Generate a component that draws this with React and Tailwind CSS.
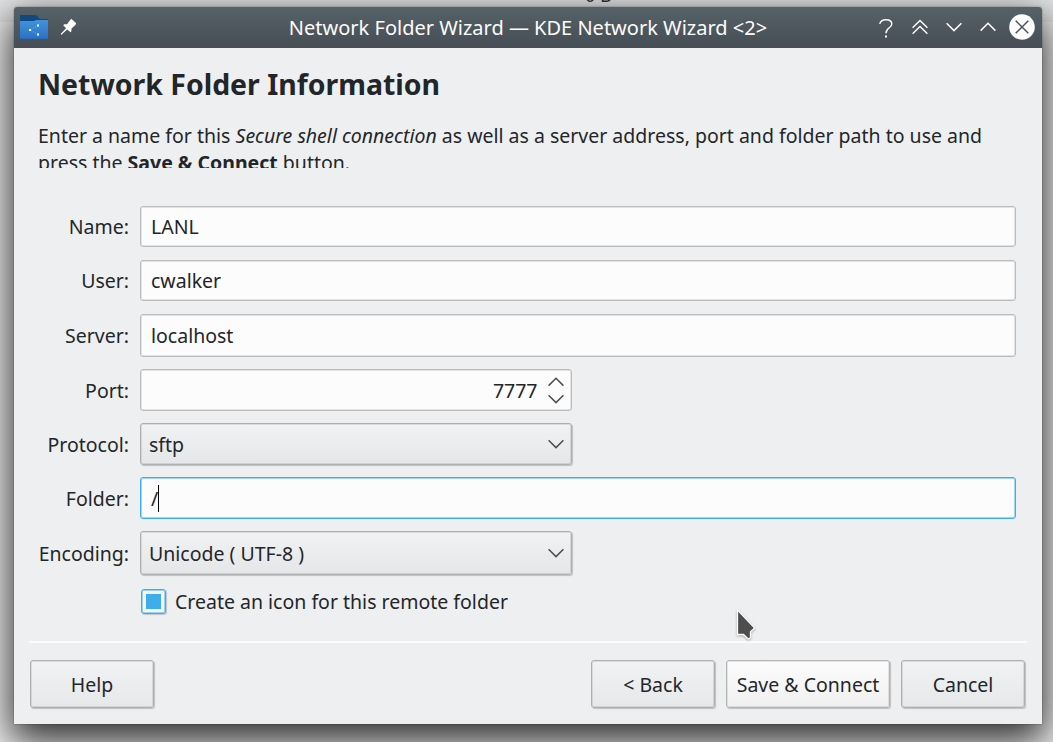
import React from "react";

const button =
  "flex h-12 items-center justify-center rounded-[3px] border border-[#adafb0] bg-linear-to-b from-[#f1f2f3] to-[#e7e8ea] whitespace-nowrap shadow-[inset_0_0_0_1px_rgba(0,0,0,0.09),1px_1px_1px_rgba(0,0,0,0.2)]";

const field =
  "flex h-full items-center rounded-[3px] border border-[#babcbd] bg-[#fcfcfc] shadow-[inset_0_0_0_1px_rgba(0,0,0,0.1)]";

function Row({ label, height = "h-[41px]", gap = "", children }) {
  return (
    <div className={"flex items-center " + height + " " + gap}>
      <label className="w-[115px] shrink-0 text-right whitespace-nowrap">{label}</label>
      <div className="ml-[11px] h-full flex-1">{children}</div>
    </div>
  );
}

function Field({ value }) {
  return <div className={field + " w-[876px] pl-[10px]"}>{value}</div>;
}

function Chevron({ up = false, className = "" }) {
  return (
    <svg width="16" height="10" viewBox="0 0 16 10" className={className} fill="none" stroke="currentColor" strokeWidth="1.5">
      <path d={up ? "M.6 8.6 8 1.2l7.4 7.4" : "M.6 1.2 8 8.6l7.4-7.4"} />
    </svg>
  );
}

function Combo({ value }) {
  return (
    <div className="flex h-full w-[432px] items-center justify-between rounded-[3px] border border-[#adafb0] bg-linear-to-b from-[#f1f2f3] to-[#e5e6e8] pr-[7.5px] pl-2 shadow-[inset_0_0_0_1px_rgba(0,0,0,0.09),1px_1px_1px_rgba(0,0,0,0.2)]">
      <span>{value}</span>
      <Chevron className="text-[#4d4d4d]" />
    </div>
  );
}

function TitleBar() {
  return (
    <header className="relative flex h-[41px] items-center justify-between rounded-t-[3px] bg-linear-to-b from-[#566168] to-[#474e55] pr-[7px] pl-[6px] text-[#fcfcfc]">
      <div className="flex items-center">
        <svg width="28" height="26" viewBox="0 0 28 26" className="-mt-px">
          <defs>
            <linearGradient id="folder" x1="0" y1="0" x2="0" y2="1">
              <stop offset="0" stopColor="#4093db" />
              <stop offset="1" stopColor="#2e70c5" />
            </linearGradient>
          </defs>
          <path d="M0 1h15.500c2 0 3 4 5.500 4h7v6H0z" fill="#10497f" />
          <path d="M0 7h14l2-1h12v19H0z" fill="url(#folder)" />
          <path d="M0 24.500h28" stroke="#2868b8" />
          <path d="M18 11.500 10 16l8 4.500" fill="none" stroke="#9cc5ee" strokeWidth=".7" strokeDasharray="1 1.500" />
          <path d="M17 10.500h2v2h-2zM9 15h2v2H9zM17 19.500h2v2h-2z" fill="#fff" />
        </svg>
        <svg width="17" height="17" viewBox="0 0 17 17" className="ml-[12px] -mt-[2px]" fill="#fcfcfc">
          <path d="M11.300.8 16.200 5.300 15.400 6.900 11.500 10.500 11.400 13.200 10.500 14.300 7.200 11.500 1.500 16.700.8 16.400 1.100 15.500 6.100 10.300 3.200 7.200 4.300 6.200 7 6.200 10.200 2.100z" />
        </svg>
      </div>
      <h1 className="absolute inset-x-0 top-[7px] text-center text-[20px] leading-[28px]">
        Network Folder Wizard — KDE Network Wizard &lt;2&gt;
      </h1>
      <div className="flex items-center">
        <svg width="14" height="19" viewBox="0 0 14 19" className="mt-px" fill="none" stroke="currentColor" strokeWidth="1.400">
          <path d="M.8 5C1.300 2.200 3.600.8 7 .8c3.700 0 5.800 1.500 5.800 4.200C12.800 9.300 7 8.200 7 14.200" />
          <path d="M7 16.600v2" strokeWidth="2" />
        </svg>
        <svg width="16" height="16" viewBox="0 0 16 16" className="-mt-[2px] ml-[19px]" fill="none" stroke="currentColor" strokeWidth="1.400">
          <path d="M.6 8.800 8 1.400l7.400 7.400M.6 14.800 8 7.400l7.400 7.400" />
        </svg>
        <Chevron className="-mt-px ml-[18px]" />
        <Chevron up className="-mt-[2px] ml-[18px]" />
        <svg width="26" height="26" viewBox="0 0 26 26" className="-mt-px ml-[13px]">
          <circle cx="13" cy="13" r="12.800" fill="#fcfcfc" />
          <path d="m6.700 6.700 12.600 12.600M19.300 6.700 6.700 19.300" stroke="#4a5258" strokeWidth="1.500" />
        </svg>
      </div>
    </header>
  );
}

export default function App() {
  return (
    <div className="relative h-[742px] w-[1053px] overflow-hidden bg-[#f1f1f1] px-[14px] pt-[7px] font-['Noto_Sans',sans-serif] text-[19.5px] leading-[27px] text-[#232629]">
      <div className="absolute inset-x-0 top-0 h-[22px] overflow-hidden bg-[#e4e6e8]">
        <span className="absolute -top-[18px] left-[585px] text-[18px] text-[#333]">0&nbsp;B</span>
      </div>
      <main className="relative h-[717px] w-[1028px] rounded-t-[3px] bg-[#eeeff1] shadow-[0_14px_38px_4px_rgba(0,0,0,0.8),0_0_2px_rgba(0,0,0,0.4)]">
        <TitleBar />
        <section className="px-6 pt-[17px]">
          <h2 className="text-[28.45px] leading-[38px] font-bold">Network Folder Information</h2>
          <p className="mt-[19px] h-[46px] overflow-hidden whitespace-nowrap">
            Enter a name for this <em>Secure shell connection</em> as well as a server address, port and folder path to use and
            <br />
            press the <b>Save &amp; Connect</b> button.
          </p>
        </section>
        <section className="mt-[38px] flex flex-col gap-3">
          <Row label="Name:"><Field value="LANL" /></Row>
          <Row label="User:" gap="mt-px"><Field value="cwalker" /></Row>
          <Row label="Server:" height="h-[43px]" gap="mt-px"><Field value="localhost" /></Row>
          <Row label="Port:" height="h-[42px]">
            <div className={field + " w-[432px] justify-end pr-[7.5px]"}>
              <span>7777</span>
              <div className="ml-[10px] flex flex-col gap-[7px] text-[#4d4d4d]">
                <Chevron up />
                <Chevron />
              </div>
            </div>
          </Row>
          <Row label="Protocol:" height="h-[42px]"><Combo value="sftp" /></Row>
          <Row label="Folder:" height="h-[42px]">
            <div className="flex h-full w-[876px] items-center rounded-[3px] border border-[#3daee9] bg-[#fcfcfc] pl-[10px] shadow-[inset_0_0_0_1px_rgba(61,174,233,0.5)]">
              /<i className="h-[27px] w-px bg-black" />
            </div>
          </Row>
          <Row label="Encoding:" height="h-[44px]"><Combo value="Unicode ( UTF-8 )" /></Row>
        </section>
        <div className="mt-[13px] ml-[127px] flex h-[27px] items-center">
          <span className="flex size-[25px] items-center justify-center rounded-[3px] border border-[#3daee9] bg-[#f3f4f5] shadow-[inset_0_0_0_1px_rgba(61,174,233,0.5),1px_1px_1px_rgba(0,0,0,0.18)]">
            <i className="size-[15px] bg-[#3daee9]" />
          </span>
          <span className="ml-[9px]">Create an icon for this remote folder</span>
        </div>
        <div className="mx-[15px] mt-[26px] h-[2px] bg-[#fcfcfc]" />
        <footer className="mt-[17px] flex justify-between pr-[17px] pl-4">
          <div className={button + " w-[124px]"}>Help</div>
          <div className="flex gap-[11px]">
            <div className={button + " w-[124px]"}>&lt; Back</div>
            <div className="flex h-12 w-[164px] items-center justify-center rounded-[3px] border border-[#b3b5b5] bg-linear-to-b from-[#fcfcfc] to-[#f0f0f0] whitespace-nowrap shadow-[inset_0_0_0_1px_rgba(0,0,0,0.09),1px_1px_1px_rgba(0,0,0,0.2)]">
              Save &amp; Connect
            </div>
            <div className={button + " w-[124px]"}>Cancel</div>
          </div>
        </footer>
      </main>
      <svg width="24" height="36" viewBox="0 0 24 36" className="absolute top-[607px] left-[735px] drop-shadow-[0_1px_1px_rgba(0,0,0,0.3)]">
        <path d="M2.500 3v24.500h6l4.700 4.500 2.300-1.200v-6l4.200-3.800z" fill="#4d4d4d" stroke="#fcfcfc" strokeWidth="1.300" />
      </svg>
    </div>
  );
}
